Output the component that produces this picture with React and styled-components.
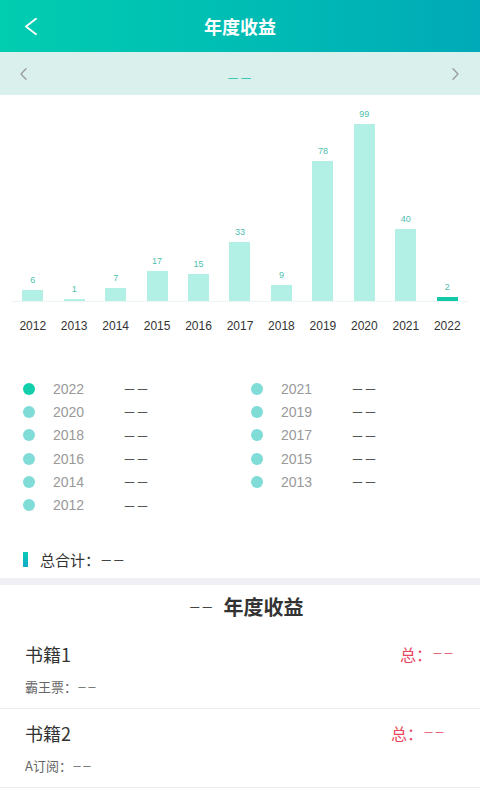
import React from "react";
import styled, { createGlobalStyle } from "styled-components";

const GlobalStyle = createGlobalStyle`
  * { box-sizing: border-box; }
  html, body { margin: 0; padding: 0; background: #fff; }
  body { font-family: "Liberation Sans", "Noto Sans CJK SC", sans-serif; color: #333; }
`;

const Page = styled.div`
  width: 480px;
  min-height: 800px;
  background: #fff;
  overflow: hidden;
`;

const Header = styled.header`
  height: 52px;
  display: grid;
  grid-template-columns: 80px 1fr 80px;
  align-items: center;
  background: linear-gradient(90deg, #01cdb0 0%, #00bdb4 50%, #00aab8 100%);
`;

const BackButton = styled.div`
  display: flex;
  align-items: center;
  padding-left: 25px;
  height: 100%;
`;

const HeaderTitle = styled.h1`
  margin: 0;
  text-align: center;
  color: #fff;
  font-size: 18px;
  font-weight: 700;
  line-height: 24px;
  font-family: "Noto Sans CJK SC", sans-serif;
`;

const SubBar = styled.div`
  height: 43px;
  background: #d9f0ec;
  display: flex;
  align-items: center;
  justify-content: space-between;
  padding: 0 21px 0 20px;
`;

const SubCenter = styled.div`
  margin-top: 7px;
  display: flex;
`;

const Dashes = styled.span`
  font-family: "Noto Sans CJK SC", sans-serif;
  font-size: ${(p) => p.$size || 13}px;
  color: ${(p) => p.$color || "#555"};
  font-weight: 400;
  line-height: 1;
`;

const Plot = styled.div`
  margin: 0 12px;
  height: 207px;
  display: grid;
  grid-template-columns: repeat(11, 1fr);
  align-items: end;
  border-bottom: 1px solid #edf5f3;
`;

const Column = styled.div`
  display: flex;
  flex-direction: column;
  align-items: center;
  justify-content: flex-end;
`;

const ValueLabel = styled.span`
  font-size: 9px;
  line-height: 12px;
  color: #4fbfae;
  margin-bottom: 4px;
`;

const Bar = styled.div`
  width: 21px;
  background: ${(p) => (p.$active ? "#14c9a8" : "#b2efe5")};
`;

const YearRow = styled.div`
  margin: 0 12px;
  padding-top: 16px;
  display: grid;
  grid-template-columns: repeat(11, 1fr);
`;

const YearLabel = styled.span`
  text-align: center;
  font-size: 12px;
  line-height: 16px;
  color: #333;
`;

const Legend = styled.div`
  margin-top: 43px;
  padding-left: 23px;
  display: grid;
  grid-template-columns: 228px 228px;
  grid-auto-rows: 23.3px;
`;

const LegendItem = styled.div`
  display: flex;
  align-items: center;
`;

const Dot = styled.span`
  width: 12px;
  height: 12px;
  border-radius: 50%;
  margin-right: 18px;
  background: ${(p) => (p.$active ? "#12cfac" : "#7fdcd7")};
`;

const LegendYear = styled.span`
  width: 70px;
  font-size: 14px;
  color: #999;
`;

const TotalRow = styled.div`
  margin-top: 33px;
  height: 20px;
  padding-left: 23px;
  display: flex;
  align-items: center;
`;

const Indicator = styled.span`
  width: 5px;
  height: 15px;
  background: linear-gradient(180deg, #0ccbb6, #13a9c6);
  margin-right: 12px;
`;

const TotalText = styled.span`
  font-family: "Noto Sans CJK SC", sans-serif;
  font-size: 15px;
  color: #333;
  display: flex;
  align-items: center;
`;

const Separator = styled.div`
  margin-top: 8px;
  height: 7px;
  background: #efeff4;
`;

const SectionTitle = styled.h2`
  margin: 0;
  height: 45px;
  padding: 8px 0 0 12px;
  display: flex;
  justify-content: center;
  align-items: flex-start;
  line-height: 28px;
  font-family: "Noto Sans CJK SC", sans-serif;
  font-size: 20px;
  font-weight: 700;
  color: #333;
`;

const TitleDash = styled(Dashes)`
  margin-right: 10px;
  line-height: 28px;
`;

const BookRow = styled.div`
  height: 79px;
  border-bottom: 1px solid #ececf0;
  padding: 13px ${(p) => p.$right}px 0 25px;
  font-family: "Noto Sans CJK SC", sans-serif;
`;

const BookHead = styled.div`
  display: flex;
  justify-content: space-between;
  align-items: center;
  height: 22px;
`;

const BookName = styled.span`
  font-size: 18px;
  color: #333;
`;

const BookTotal = styled.span`
  font-size: 16px;
  color: #e8475f;
  display: flex;
  align-items: center;
`;

const BookSub = styled.div`
  margin-top: 13px;
  height: 18px;
  font-size: 13px;
  color: #666;
  display: flex;
  align-items: center;
`;

const data = [
  [2012, 6],
  [2013, 1],
  [2014, 7],
  [2015, 17],
  [2016, 15],
  [2017, 33],
  [2018, 9],
  [2019, 78],
  [2020, 99],
  [2021, 40],
  [2022, 2],
];

const legendYears = [2022, 2021, 2020, 2019, 2018, 2017, 2016, 2015, 2014, 2013, 2012];

const books = [
  { name: "书籍1", sub: "霸王票：", right: 26 },
  { name: "书籍2", sub: "A订阅：", right: 35 },
];

const Chevron = ({ dir = "left", color = "#999", w = 7, h = 12, sw = 1.3 }) => (
  <svg width={w} height={h} viewBox={`0 0 ${w} ${h}`} fill="none">
    <path
      d={dir === "left" ? `M${w - 1} 0.8 L1 ${h / 2} L${w - 1} ${h - 0.8}` : `M1 0.8 L${w - 1} ${h / 2} L1 ${h - 0.8}`}
      stroke={color}
      strokeWidth={sw}
      strokeLinecap="round"
      strokeLinejoin="round"
    />
  </svg>
);

export default function App() {
  return (
    <Page>
      <GlobalStyle />
      <Header>
        <BackButton>
          <Chevron dir="left" color="#fff" w={12} h={17} sw={1.8} />
        </BackButton>
        <HeaderTitle>年度收益</HeaderTitle>
        <div />
      </Header>
      <SubBar>
        <Chevron dir="left" color="#9a9a9a" />
        <SubCenter>
          <Dashes $size={13} $color="#3fc7b3">－－</Dashes>
        </SubCenter>
        <Chevron dir="right" color="#9a9a9a" />
      </SubBar>

      <Plot>
        {data.map(([year, v]) => (
          <Column key={year}>
            <ValueLabel>{v}</ValueLabel>
            <Bar $active={year === 2022} style={{ height: `${v * 1.79}px` }} />
          </Column>
        ))}
      </Plot>
      <YearRow>
        {data.map(([year]) => (
          <YearLabel key={year}>{year}</YearLabel>
        ))}
      </YearRow>

      <Legend>
        {legendYears.map((y) => (
          <LegendItem key={y}>
            <Dot $active={y === 2022} />
            <LegendYear>{y}</LegendYear>
            <Dashes $size={13} $color="#555">－－</Dashes>
          </LegendItem>
        ))}
      </Legend>

      <TotalRow>
        <Indicator />
        <TotalText>
          总合计：<Dashes $size={12.5} $color="#444">－－</Dashes>
        </TotalText>
      </TotalRow>

      <Separator />

      <SectionTitle>
        <TitleDash $size={12.5} $color="#444">－－</TitleDash>
        <span>年度收益</span>
      </SectionTitle>

      {books.map((b) => (
        <BookRow key={b.name} $right={b.right}>
          <BookHead>
            <BookName>{b.name}</BookName>
            <BookTotal>
              总：<Dashes $size={11} $color="#e8475f">－－</Dashes>
            </BookTotal>
          </BookHead>
          <BookSub>
            {b.sub}
            <Dashes $size={10} $color="#555">－－</Dashes>
          </BookSub>
        </BookRow>
      ))}
    </Page>
  );
}
